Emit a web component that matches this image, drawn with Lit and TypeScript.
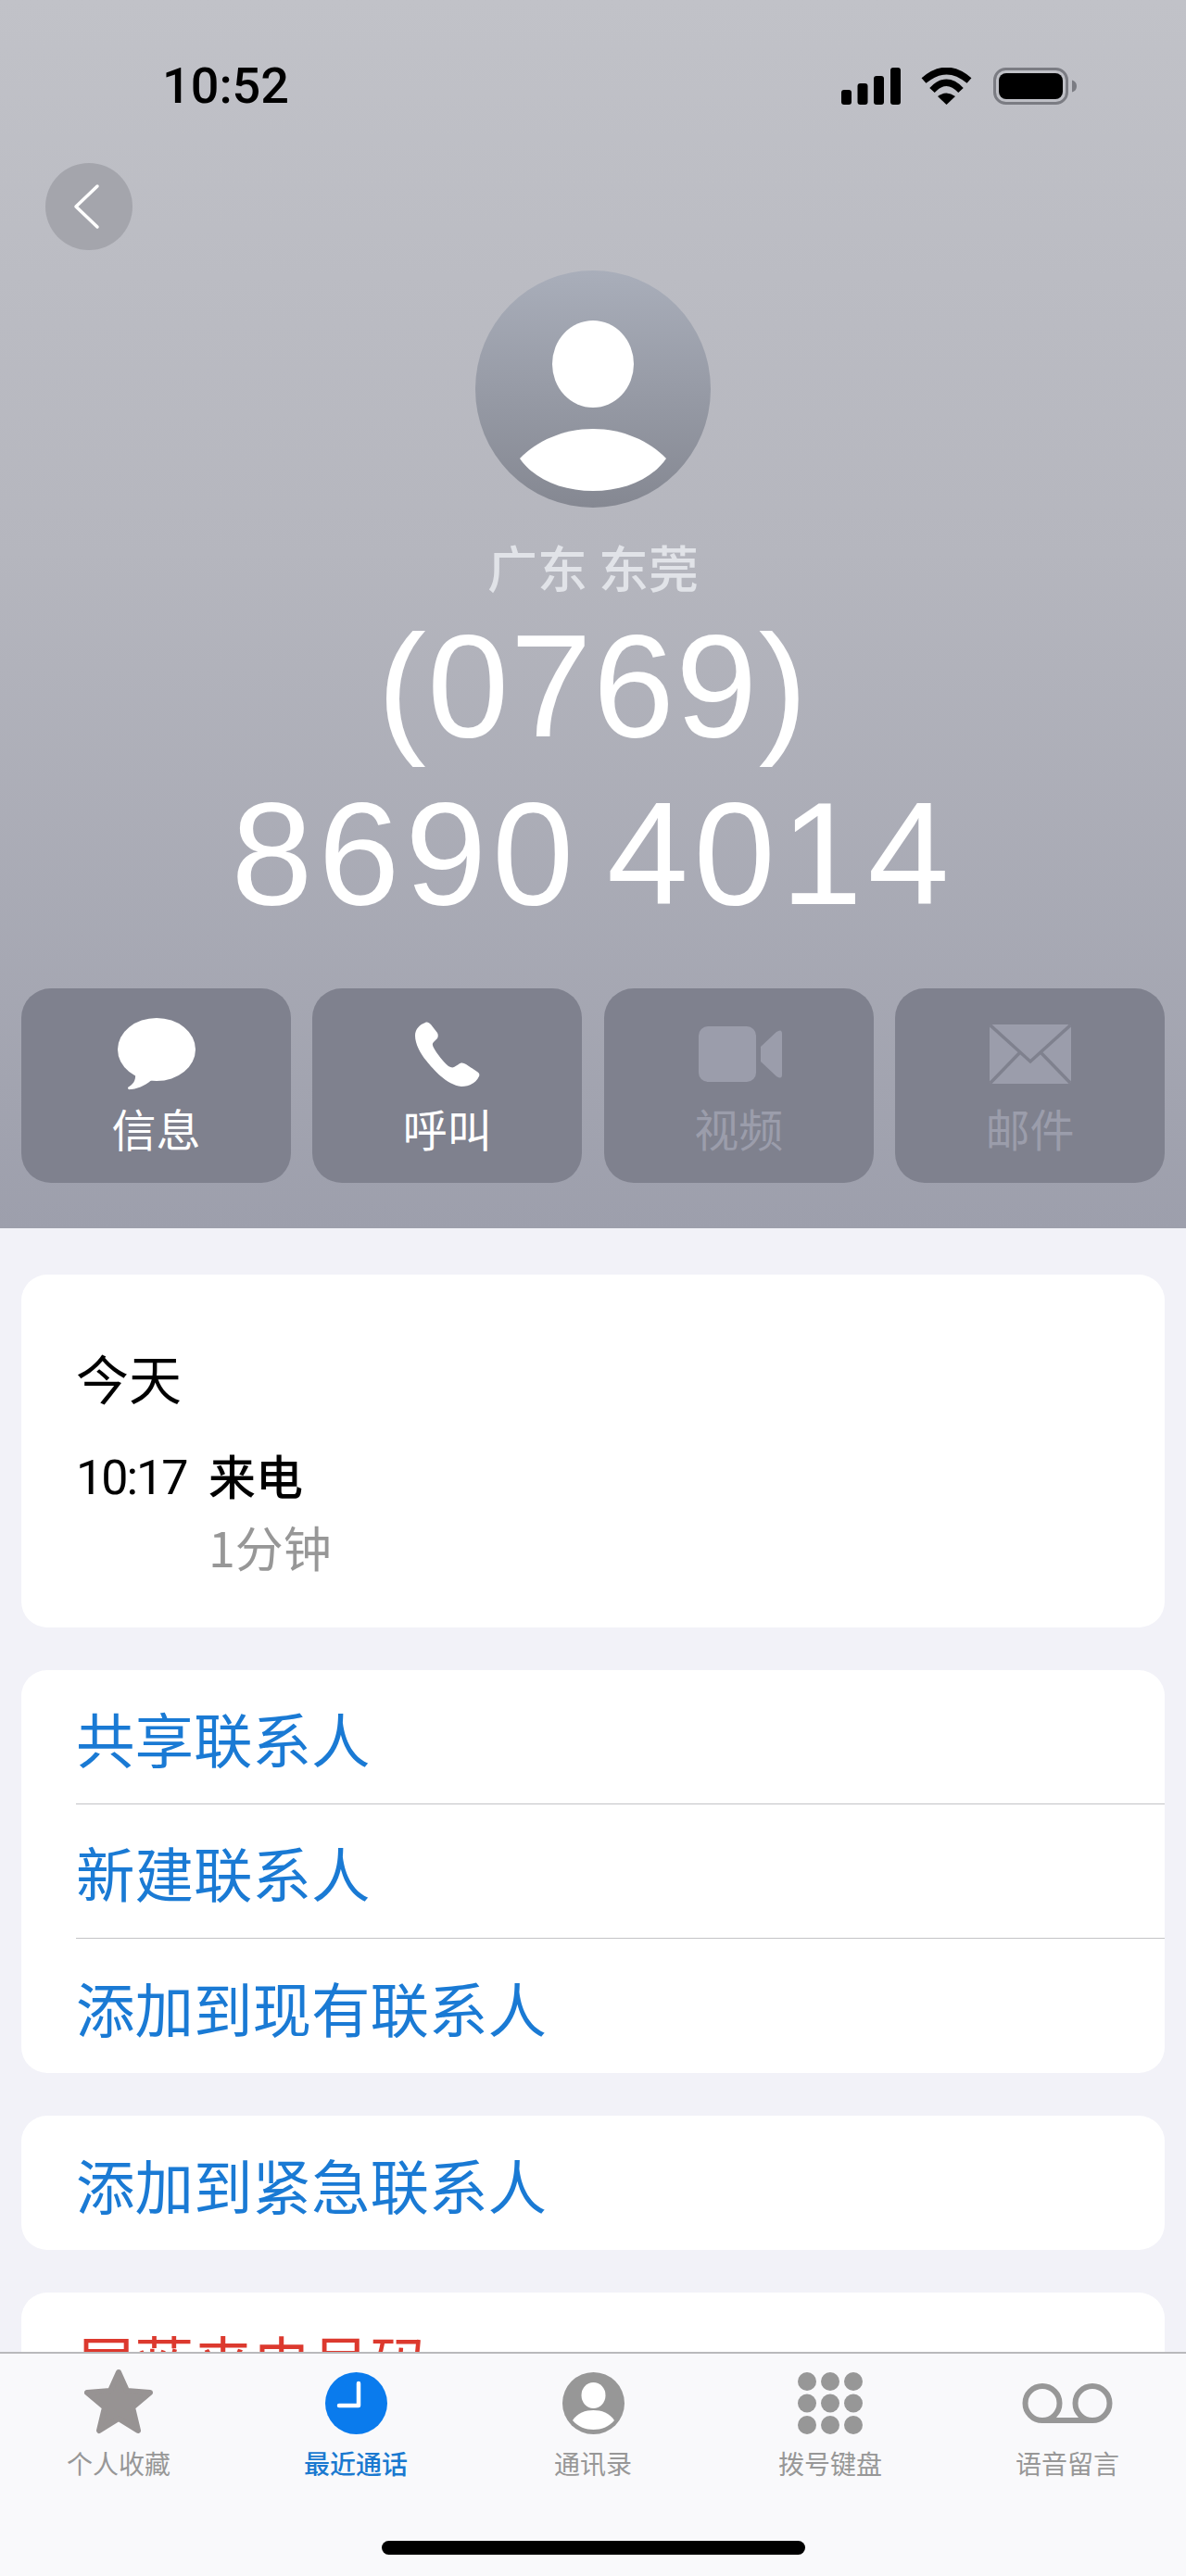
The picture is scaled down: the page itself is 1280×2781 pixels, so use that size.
import { LitElement, html, css, svg } from "lit";
import { customElement } from "lit/decorators.js";

@customElement("app-root")
export class AppRoot extends LitElement {
  static styles = css`
    :host { display: block; width: 1280px; height: 2781px; overflow: hidden; font-family: "Noto Sans CJK SC", "Noto Sans", sans-serif; }
    * { box-sizing: border-box; }
    .app { width: 1280px; height: 2781px; display: flex; flex-direction: column; background: #f2f2f8; }
    .scroll { flex: 1 1 0; min-height: 0; overflow: hidden; }
    header { height: 1326px; padding: 73px 23px 0; display: flex; flex-direction: column; background: linear-gradient(180deg, #c1c2c8 0%, #b5b6be 45%, #9d9fac 100%); }
    .status { display: flex; align-items: center; height: 40px; padding: 0 95px 0 152px; }
    .time { flex: 1; font: 500 54px/44px Roboto, sans-serif; color: #000; }
    .status svg { display: block; flex: none; }
    .sig { margin-right: 22px; }
    .wifi { margin-right: 23px; }
    .back { width: 94px; height: 94px; margin: 63px 0 0 26px; border-radius: 50%; background: #a4a5ac; flex: none; }
    .back svg, .avatar svg { display: block; }
    .avatar { width: 254px; height: 256px; margin: 22px auto 0; border-radius: 50%; background: linear-gradient(180deg, #a9aeba 0%, #858892 100%); flex: none; }
    .loc { margin-top: 32px; text-align: center; font-size: 54px; line-height: 64px; color: #e1e3e8; font-weight: 500; }
    .num { margin-top: 6px; text-align: center; font: 400 158px/181px "Liberation Sans", Arial, sans-serif; color: #fff; }
    .area { letter-spacing: 1.5px; }
    .local { letter-spacing: 6px; word-spacing: -20px; }
    .actions { margin-top: 55px; display: grid; grid-template-columns: repeat(4, 291px); justify-content: space-between; }
    .act { height: 210px; border-radius: 32px; background: #7f818e; display: flex; flex-direction: column; align-items: center; color: #fff; }
    .act.off { color: #9b9dab; }
    .ic { height: 110px; display: flex; align-items: flex-end; justify-content: center; }
    .ic svg { display: block; }
    .ph { margin-bottom: 4px; }
    .vd { margin: 0 0 9px 3px; }
    .ml { margin: 0 0 7px 2px; }
    .act span { font-size: 48px; line-height: 56px; margin-top: 12px; font-weight: 400; }
    .cards { padding: 50px 23px 0; display: flex; flex-direction: column; gap: 46px; }
    .card { background: #fff; border-radius: 28px; }
    .recent { height: 381px; padding: 70px 59px 0; color: #000; }
    .day { font-size: 57px; line-height: 80px; font-weight: 400; }
    .call { display: grid; grid-template-columns: 143px auto; justify-content: start; margin-top: 31px; }
    .ctime { font: 400 52px/70px Roboto, sans-serif; letter-spacing: -2px; padding-top: 4px; }
    .ctype { font-size: 51px; line-height: 70px; font-weight: 500; }
    .cdur { grid-column: 2; font-size: 52px; line-height: 76px; margin-top: 1px; color: #979797; font-weight: 400; }
    .row { height: 145px; margin-left: 59px; display: flex; align-items: center; font-size: 63.5px; color: #1a7ad4; border-bottom: 1px solid #c3c3c6; font-weight: 400; }
    .row:last-child { border-bottom: 0; }
    .row.red { color: #dc392e; }
    .tabs { flex: none; height: 242px; border-top: 2px solid #b9b9bc; background: #f9f9fb; position: relative; display: grid; grid-template-columns: repeat(5, 256px); }
    .tab { display: flex; flex-direction: column; align-items: center; color: #979797; }
    .tab.on { color: #1a79d0; }
    .tab.on span { font-weight: 500; }
    .ti { height: 105px; display: flex; align-items: flex-end; justify-content: center; padding-bottom: 18px; }
    .ti svg { display: block; }
    .vm { margin-bottom: 12px; }
    .tab span { font-size: 28px; line-height: 32px; font-weight: 400; margin-top: -3px; }
    .home { position: absolute; left: 412px; top: 202px; width: 457px; height: 15px; border-radius: 8px; background: #000; }
  `;

  private tab(label: string, icon: unknown, on = false) {
    return html`<div class="tab ${on ? "on" : ""}"><div class="ti">${icon}</div><span>${label}</span></div>`;
  }

  render() {
    const disabled = "#9b9dab";
    return html`<div class="app">
      <div class="scroll">
        <header>
          <div class="status">
            <div class="time">10:52</div>
            <svg class="sig" width="64" height="40" viewBox="0 0 64 40"><rect x="0" y="24" width="11" height="16" rx="3"/><rect x="17.5" y="17" width="11" height="23" rx="3"/><rect x="35" y="9" width="11" height="31" rx="3"/><rect x="53" y="0" width="11" height="40" rx="3"/></svg>
            <svg class="wifi" width="55" height="40" viewBox="0 0 55 40"><path d="M3 14Q27.500-7 52 14" fill="none" stroke="#000" stroke-width="7.500"/><path d="M12 24.500Q27.500 8 43 24.500" fill="none" stroke="#000" stroke-width="7.500"/><path d="M18 31Q27.500 24 37 31L27.500 40Z"/></svg>
            <svg width="90" height="40" viewBox="0 0 90 40"><rect x="1.500" y="1.500" width="78" height="37" rx="12" fill="none" stroke="#7b7c83" stroke-width="3"/><rect x="6" y="6" width="69" height="28" rx="8"/><path d="M85 13.500Q90 15 90 20Q90 25 85 26.500Z" fill="#7b7c83"/></svg>
          </div>
          <div class="back"><svg width="94" height="94" viewBox="0 0 94 94"><path d="M56 25L33 47L56 69" fill="none" stroke="#fff" stroke-width="3.500" stroke-linecap="round" stroke-linejoin="round"/></svg></div>
          <div class="avatar"><svg width="254" height="256" viewBox="0 0 254 256"><ellipse cx="127" cy="101" rx="44" ry="47" fill="#fff"/><path d="M48 203C66 184 95 171 127 171C159 171 188 184 206 203C190 226 160 238 127 238C94 238 64 226 48 203Z" fill="#fff"/></svg></div>
          <div class="loc">广东 东莞</div>
          <div class="num"><div class="area">(0769)</div><div class="local">8690 4014</div></div>
          <div class="actions">
            <div class="act"><div class="ic"><svg width="84" height="78" viewBox="0 0 84 78"><ellipse cx="42" cy="34" rx="42" ry="34" fill="#fff"/><path d="M19 60C20 68 16 72 11 75C11 78 13 77 15 77C24 76 32 71 38 66Z" fill="#fff"/></svg></div><span>信息</span></div>
            <div class="act"><div class="ic"><svg class="ph" width="70" height="70" viewBox="0 0 70 70"><path d="M11 1C5 3 0 8 0 15C0 24 6 35 12 42C20 52 34 68 50 70C58 70 66 66 69 59C70 57 69 55 67 54L55 46C52 44 49 44 47 46L42 49C40 50 38 49 36 48C30 43 24 35 20 28C19 26 18 24 20 22L24 18C25 16 25 14 24 12L17 3C15 1 13 0 11 1Z" fill="#fff"/></svg></div><span>呼叫</span></div>
            <div class="act off"><div class="ic"><svg class="vd" width="90" height="60" viewBox="0 0 90 60"><rect width="62" height="60" rx="10" fill="${disabled}"/><path d="M67 22L84 6Q90 2 90 8V52Q90 58 84 54L67 38Z" fill="${disabled}"/></svg></div><span>视频</span></div>
            <div class="act off"><div class="ic"><svg class="ml" width="88" height="64" viewBox="0 0 88 64"><rect width="88" height="64" rx="4" fill="${disabled}"/><path d="M1 1L44 40L87 1M1 63L33 30M87 63L55 30" fill="none" stroke="#7f818e" stroke-width="3.500"/></svg></div><span>邮件</span></div>
          </div>
        </header>
        <div class="cards">
          <div class="card recent">
            <div class="day">今天</div>
            <div class="call"><div class="ctime">10:17</div><div class="ctype">来电</div><div class="cdur">1分钟</div></div>
          </div>
          <div class="card">
            <div class="row">共享联系人</div>
            <div class="row">新建联系人</div>
            <div class="row">添加到现有联系人</div>
          </div>
          <div class="card"><div class="row">添加到紧急联系人</div></div>
          <div class="card"><div class="row red">屏蔽来电号码</div></div>
        </div>
      </div>
      <nav class="tabs">
        ${this.tab("个人收藏", svg`<svg width="74" height="71" viewBox="0 0 74 71"><path d="M37 4L46 24L71 26L52 42L58 67L37 54L16 67L22 42L3 26L28 24Z" fill="#979393" stroke="#979393" stroke-width="6" stroke-linejoin="round"/></svg>`)}
        ${this.tab("最近通话", svg`<svg width="67" height="67" viewBox="0 0 67 67"><circle cx="33.500" cy="33.500" r="33.500" fill="#0a7bed"/><path d="M36 12V36H15" fill="none" stroke="#fff" stroke-width="4.500" stroke-linecap="round" stroke-linejoin="round"/></svg>`, true)}
        ${this.tab("通讯录", svg`<svg width="67" height="67" viewBox="0 0 67 67"><circle cx="33.500" cy="33.500" r="33.500" fill="#979797"/><ellipse cx="33.500" cy="25" rx="13" ry="14" fill="#fff"/><path d="M11 52C16 44 25 41 33.500 41C42 41 51 44 56 52C50 59 42 62 33.500 62C25 62 17 59 11 52Z" fill="#fff"/></svg>`)}
        ${this.tab("拨号键盘", svg`<svg width="70" height="67" viewBox="0 0 70 67" fill="#979797"><circle cx="10" cy="10" r="10"/><circle cx="35" cy="10" r="10"/><circle cx="60" cy="10" r="10"/><circle cx="10" cy="33.500" r="10"/><circle cx="35" cy="33.500" r="10"/><circle cx="60" cy="33.500" r="10"/><circle cx="10" cy="57" r="10"/><circle cx="35" cy="57" r="10"/><circle cx="60" cy="57" r="10"/></svg>`)}
        ${this.tab("语音留言", svg`<svg class="vm" width="98" height="43" viewBox="0 0 98 43" fill="none" stroke="#979797" stroke-width="6"><circle cx="22" cy="21.500" r="18.500"/><circle cx="76" cy="21.500" r="18.500"/><path d="M22 40H76"/></svg>`)}
        <div class="home"></div>
      </nav>
    </div>`;
  }
}
